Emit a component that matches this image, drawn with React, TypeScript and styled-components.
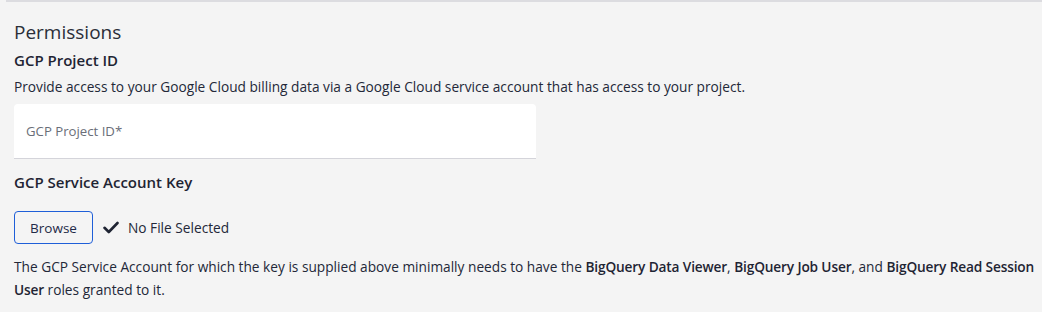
import React from "react";
import styled, { createGlobalStyle } from "styled-components";

const Global = createGlobalStyle`
  html, body { margin: 0; padding: 0; background: #f4f4f4; }
  body { font-family: "Open Sans", "Noto Sans", sans-serif; color: #232838; }
`;

const Page = styled.div`
  width: 1036px;
  height: 312px;
  box-sizing: border-box;
  background: #f4f4f4;
  border-top: 2px solid #dcdce0;
  margin-left: 6px;
  padding: 18px 0 0 8px;
`;

const Title = styled.h2`
  margin: 0;
  font-size: 19px;
  font-weight: 400;
  line-height: 24px;
  color: #2a2e38;
`;

const Label = styled.h3<{ $top: number }>`
  margin: ${(p) => p.$top}px 0 0;
  font-size: 15px;
  font-weight: 600;
  line-height: 20px;
  color: #1f2433;
`;

const Text = styled.p<{ $top: number }>`
  margin: ${(p) => p.$top}px 0 0;
  font-size: 13.7px;
  line-height: 23px;
  color: #232838;
  b { font-weight: 600; color: #1f2433; letter-spacing: -0.15px; }
`;

const Field = styled.div`
  margin-top: 6px;
  width: 522px;
  height: 55px;
  box-sizing: border-box;
  background: #fff;
  border-radius: 4px 4px 0 0;
  border-bottom: 1px solid #d4d4da;
  display: flex;
  align-items: center;
  padding: 0 12px;
  font-size: 13.2px;
  color: #6a6e78;
`;

const FileRow = styled.div`
  margin-top: 19px;
  display: flex;
  align-items: center;
  gap: 10px;
`;

const Browse = styled.button`
  width: 79px;
  height: 33px;
  box-sizing: border-box;
  border: 1px solid #1f5fd8;
  border-radius: 4px;
  background: transparent;
  font-family: inherit;
  font-size: 13.5px;
  color: #1f2a48;
  cursor: pointer;
`;

const Status = styled.span`
  display: inline-flex;
  align-items: center;
  gap: 9px;
  font-size: 13.7px;
  color: #232838;
`;

export default function App() {
  return (
    <>
      <Global />
      <Page>
        <Title>Permissions</Title>
        <Label $top={6}>GCP Project ID</Label>
        <Text $top={5}>
          Provide access to your Google Cloud billing data via a Google Cloud service account that has access to your project.
        </Text>
        <Field>GCP Project ID*</Field>
        <Label $top={13}>GCP Service Account Key</Label>
        <FileRow>
          <Browse>Browse</Browse>
          <Status>
            <svg width="16" height="13" viewBox="0 0 16 13">
              <path d="M1.5 6.8 L5.8 11 L14.5 2" fill="none" stroke="#1f2433" strokeWidth="2.6" strokeLinecap="round" strokeLinejoin="round" />
            </svg>
            No File Selected
          </Status>
        </FileRow>
        <Text $top={11}>
          The GCP Service Account for which the key is supplied above minimally needs to have the <b>BigQuery Data Viewer</b>, <b>BigQuery Job User</b>, and <b>BigQuery Read Session User</b> roles granted to it.
        </Text>
      </Page>
    </>
  );
}
